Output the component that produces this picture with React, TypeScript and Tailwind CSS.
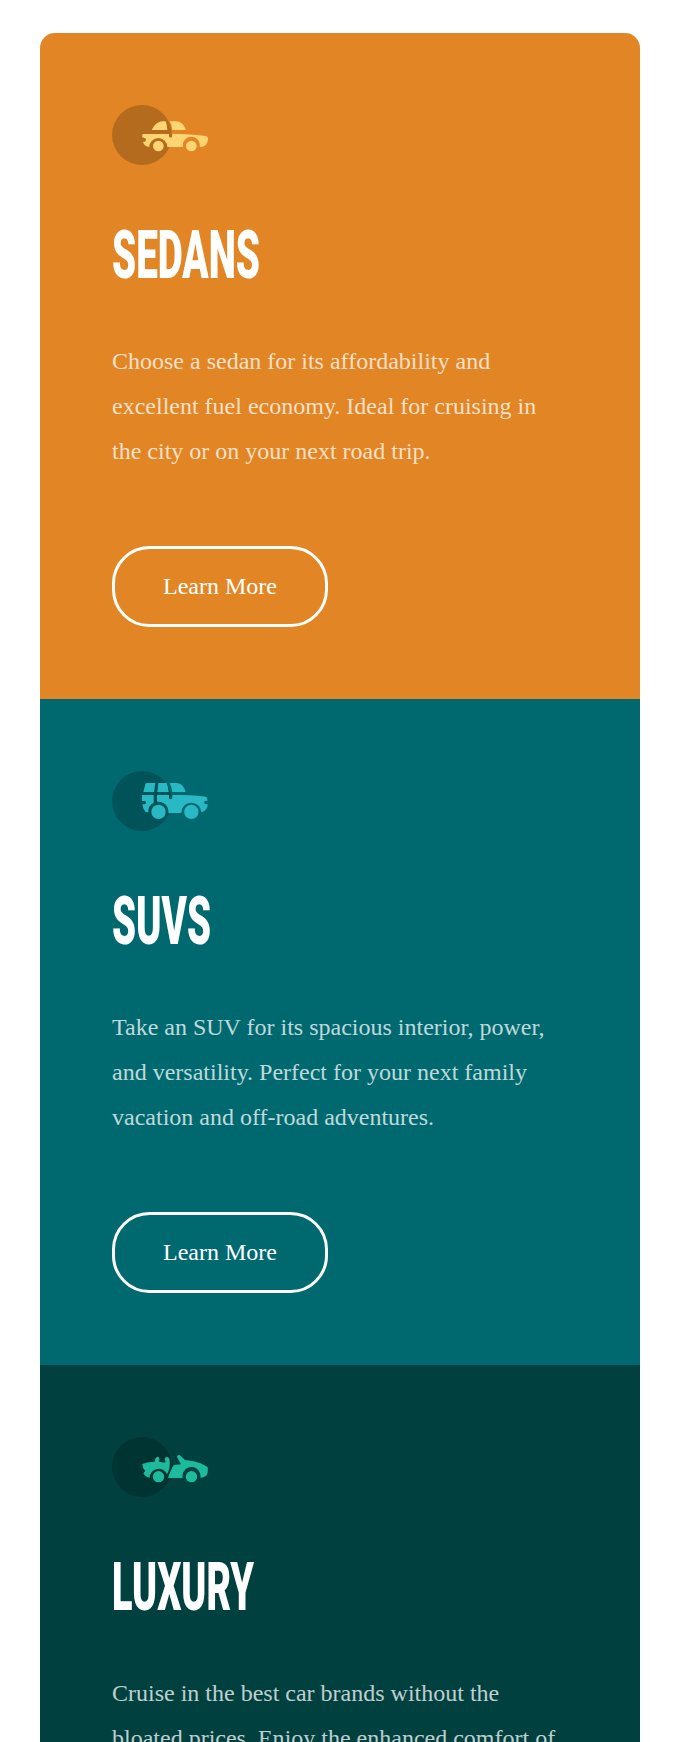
import type { ReactNode } from 'react';

const sedan = (
  <>
    <circle cx="126" cy="120" r="90" fill="#000" fillOpacity=".2" />
    <g fill="#FFD473">
      <path d="M155 105C160 94 168 85 178 81Q183 79 188 79H197Q201 90 202 105Z" />
      <path d="M209 79H228C244 79 252 91 258 105H217Q216 91 209 79Z" />
      <path d="M130 117H207V124Q208 128 212 128Q217 128 217 122V116C250 117 290 119 317 123Q324 124 324 131C323 144 318 154 303 156H299A25.5 25.5 0 1 0 249 156H202A27 27 0 1 0 148 156C138 155 131 150 129 140H134Q138 139 138 134Q138 129 133 129L127 127Q125 118 130 117Z" />
      <circle cx="175" cy="153" r="16" />
      <circle cx="274" cy="153" r="16" />
    </g>
  </>
);

const suv = (
  <>
    <circle cx="126" cy="120" r="90" fill="#000" fillOpacity=".2" />
    <g fill="#28B9C5">
      <path d="M130 93L136 70Q137 66 141 66H166L162 93Z" />
      <path d="M175 66H200Q205 79 206 93H172Z" />
      <path d="M209 66H228C245 66 253 79 257 93H217Q215 78 209 66Z" />
      <path d="M126 102H161V125.5A30 30 0 0 0 145 154L137 153Q129 145 127 130H134Q138 129 138 125Q138 120 134 120H126Z" />
      <path d="M171 102H207V110Q208 115 212 115Q217 115 217 109V102C250 102 285 103 318 107Q322 109 323 119H318Q312 120 312 125Q313 130 323 130Q324 147 304 154A30 30 0 1 0 244 156H205A30 30 0 0 0 171 122.3Z" />
      <circle cx="175.5" cy="152.5" r="21.5" />
      <circle cx="274" cy="152.5" r="21.5" />
    </g>
  </>
);

const luxury = (
  <>
    <circle cx="126" cy="120" r="90" fill="#000" fillOpacity=".2" />
    <g fill="#1CBB9D">
      <path d="M127 111Q145 104 164 104Q165 93 170 90Q178 88 178 96L177 104Q187 107 197 106L194 95Q195 90 200 90Q206 89 208 96C211 111 210 127 201 142A27 27 0 0 0 149 152Q138 152 130 139L136 132L129 122Z" />
      <path d="M204 153C209 138 214 125 220 116Q224 113 243 112L232 92Q230 86 235 84Q239 83 243 88L255 99C285 102 305 108 323 121Q325 131 321 143Q315 151 301 152A27 27 0 1 0 248 153Z" />
      <circle cx="175.5" cy="149" r="17" />
      <circle cx="274.5" cy="149" r="17" />
    </g>
  </>
);

type CardProps = { icon: ReactNode; title: string; stretch: string; text: string; background: string };

function Card({ icon, title, stretch, text, background }: CardProps) {
  return (
    <section className={`flex h-[666px] flex-col items-start p-[72px] ${background}`}>
      <svg className="h-[60px] w-24 shrink-0" viewBox="36 30 288 180">
        {icon}
      </svg>
      <h2 className={`mt-[50px] h-[80px] shrink-0 origin-left font-['Roboto'] text-[67.5px] leading-[80px] font-black whitespace-nowrap text-white ${stretch}`}>
        {title}
      </h2>
      <p className="mt-[44px] w-[456px] text-2xl leading-[45px] text-white/75">{text}</p>
      <button className="mt-[72px] h-[81px] w-[216px] shrink-0 rounded-[37.5px] border-[3px] border-white pb-0.5 text-2xl text-white">
        Learn More
      </button>
    </section>
  );
}

export default function App() {
  return (
    <main className="h-[1742px] overflow-hidden bg-white px-10 pt-[33px] font-['Liberation_Serif',serif]">
      <div className="w-[600px] overflow-hidden rounded-[15px]">
        <Card
          icon={sedan}
          title="SEDANS"
          stretch="scale-x-[0.572]"
          text="Choose a sedan for its affordability and excellent fuel economy. Ideal for cruising in the city or on your next road trip."
          background="bg-[#E28625]"
        />
        <Card
          icon={suv}
          title="SUVS"
          stretch="scale-x-[0.569]"
          text="Take an SUV for its spacious interior, power, and versatility. Perfect for your next family vacation and off-road adventures."
          background="bg-[#006970]"
        />
        <Card
          icon={luxury}
          title="LUXURY"
          stretch="scale-x-[0.56]"
          text="Cruise in the best car brands without the bloated prices. Enjoy the enhanced comfort of a luxury rental and arrive in style."
          background="bg-[#004140]"
        />
      </div>
    </main>
  );
}
